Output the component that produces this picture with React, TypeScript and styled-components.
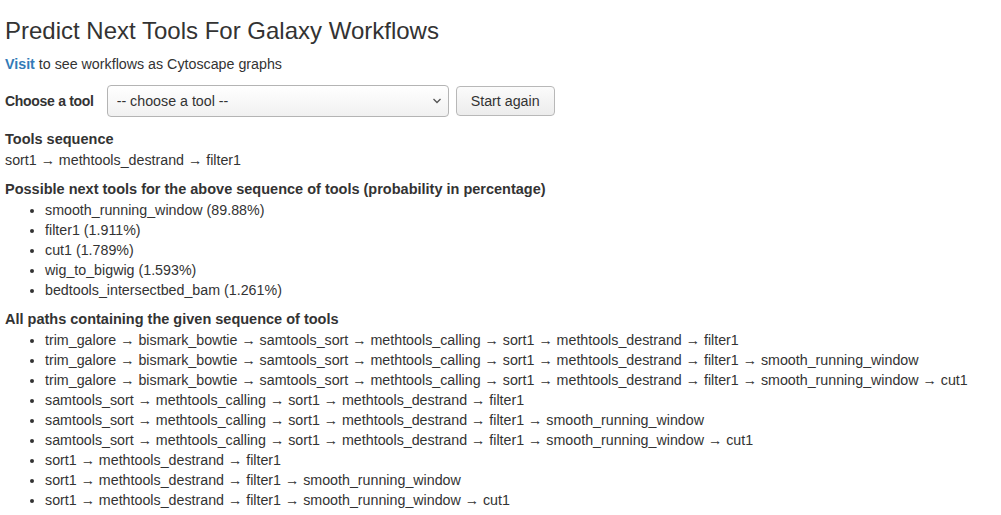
import React, { useState } from 'react';
import styled, { createGlobalStyle } from 'styled-components';

const GlobalStyle = createGlobalStyle`
  html, body {
    margin: 0;
    padding: 0;
    background: #fff;
  }
  body {
    font-family: "Liberation Sans", Arial, sans-serif;
    font-size: 14.25px;
    line-height: 20px;
    color: #333;
  }
`;

const Page = styled.div`
  padding: 0 5px;
`;

const Title = styled.h3`
  font-size: 24px;
  font-weight: 400;
  line-height: 26.4px;
  margin: 18px 0 10px;
  color: #333;
`;

const Intro = styled.p`
  margin: 0 0 11px;
`;

const Link = styled.a`
  color: #337ab7;
  font-weight: 700;
  text-decoration: none;
`;

const FormRow = styled.div`
  display: flex;
  align-items: center;
  height: 32px;
  margin-bottom: 12px;
`;

const Label = styled.label`
  font-weight: 700;
  font-size: 14px;
  letter-spacing: -0.3px;
  margin-right: 13px;
`;

const SelectWrap = styled.div`
  position: relative;
  width: 342px;
  height: 32px;
  margin-right: 7px;
`;

const Select = styled.select`
  appearance: none;
  width: 100%;
  height: 100%;
  box-sizing: border-box;
  padding: 0 28px 0 9px;
  font-family: inherit;
  font-size: 14.25px;
  color: #333;
  border: 1px solid #b4b4b4;
  border-radius: 4px;
  background: linear-gradient(#ffffff, #f1f1f1);
  outline: none;
`;

const Chevron = styled.svg`
  position: absolute;
  right: 7px;
  top: 13px;
  pointer-events: none;
`;

const Button = styled.button`
  height: 30px;
  box-sizing: border-box;
  padding: 0 14px;
  font-family: inherit;
  font-size: 14.25px;
  color: #333;
  border: 1px solid #b8b8b8;
  border-radius: 4px;
  background: linear-gradient(#fbfbfb, #ececec);
  cursor: pointer;
`;

const Section = styled.div`
  margin-bottom: 9px;
`;

const Heading = styled.div`
  font-weight: 700;
  font-size: 14.5px;
  margin-bottom: 1px;
`;

const List = styled.ul`
  margin: 0;
  padding-left: 40px;
`;

const Item = styled.li`
  line-height: 20px;
`;

const predictions = [
  ['smooth_running_window', '89.88%'],
  ['filter1', '1.911%'],
  ['cut1', '1.789%'],
  ['wig_to_bigwig', '1.593%'],
  ['bedtools_intersectbed_bam', '1.261%'],
];

const paths = [
  ['trim_galore', 'bismark_bowtie', 'samtools_sort', 'methtools_calling', 'sort1', 'methtools_destrand', 'filter1'],
  ['trim_galore', 'bismark_bowtie', 'samtools_sort', 'methtools_calling', 'sort1', 'methtools_destrand', 'filter1', 'smooth_running_window'],
  ['trim_galore', 'bismark_bowtie', 'samtools_sort', 'methtools_calling', 'sort1', 'methtools_destrand', 'filter1', 'smooth_running_window', 'cut1'],
  ['samtools_sort', 'methtools_calling', 'sort1', 'methtools_destrand', 'filter1'],
  ['samtools_sort', 'methtools_calling', 'sort1', 'methtools_destrand', 'filter1', 'smooth_running_window'],
  ['samtools_sort', 'methtools_calling', 'sort1', 'methtools_destrand', 'filter1', 'smooth_running_window', 'cut1'],
  ['sort1', 'methtools_destrand', 'filter1'],
  ['sort1', 'methtools_destrand', 'filter1', 'smooth_running_window'],
  ['sort1', 'methtools_destrand', 'filter1', 'smooth_running_window', 'cut1'],
];

const sequence = ['sort1', 'methtools_destrand', 'filter1'];

const App: React.FC = () => {
  const [tool, setTool] = useState('');

  return (
    <Page>
      <GlobalStyle />
      <Title>Predict Next Tools For Galaxy Workflows</Title>
      <Intro>
        <Link href="#">Visit</Link> to see workflows as Cytoscape graphs
      </Intro>

      <FormRow>
        <Label>Choose a tool</Label>
        <SelectWrap>
          <Select value={tool} onChange={(e) => setTool(e.target.value)}>
            <option value="">-- choose a tool --</option>
            <option value="sort1">sort1</option>
            <option value="filter1">filter1</option>
          </Select>
          <Chevron width="10" height="6" viewBox="0 0 10 6">
            <path d="M1.5 1 L5 4.5 L8.5 1" fill="none" stroke="#555" strokeWidth="1.3" />
          </Chevron>
        </SelectWrap>
        <Button onClick={() => setTool('')}>Start again</Button>
      </FormRow>

      <Section>
        <Heading>Tools sequence</Heading>
        <div>{sequence.join(' → ')}</div>
      </Section>

      <Section>
        <Heading>Possible next tools for the above sequence of tools (probability in percentage)</Heading>
        <List>
          {predictions.map(([name, prob]) => (
            <Item key={name}>
              {name} ({prob})
            </Item>
          ))}
        </List>
      </Section>

      <Section>
        <Heading>All paths containing the given sequence of tools</Heading>
        <List>
          {paths.map((p, i) => (
            <Item key={i}>{p.join(' → ')}</Item>
          ))}
        </List>
      </Section>
    </Page>
  );
};

export default App;
